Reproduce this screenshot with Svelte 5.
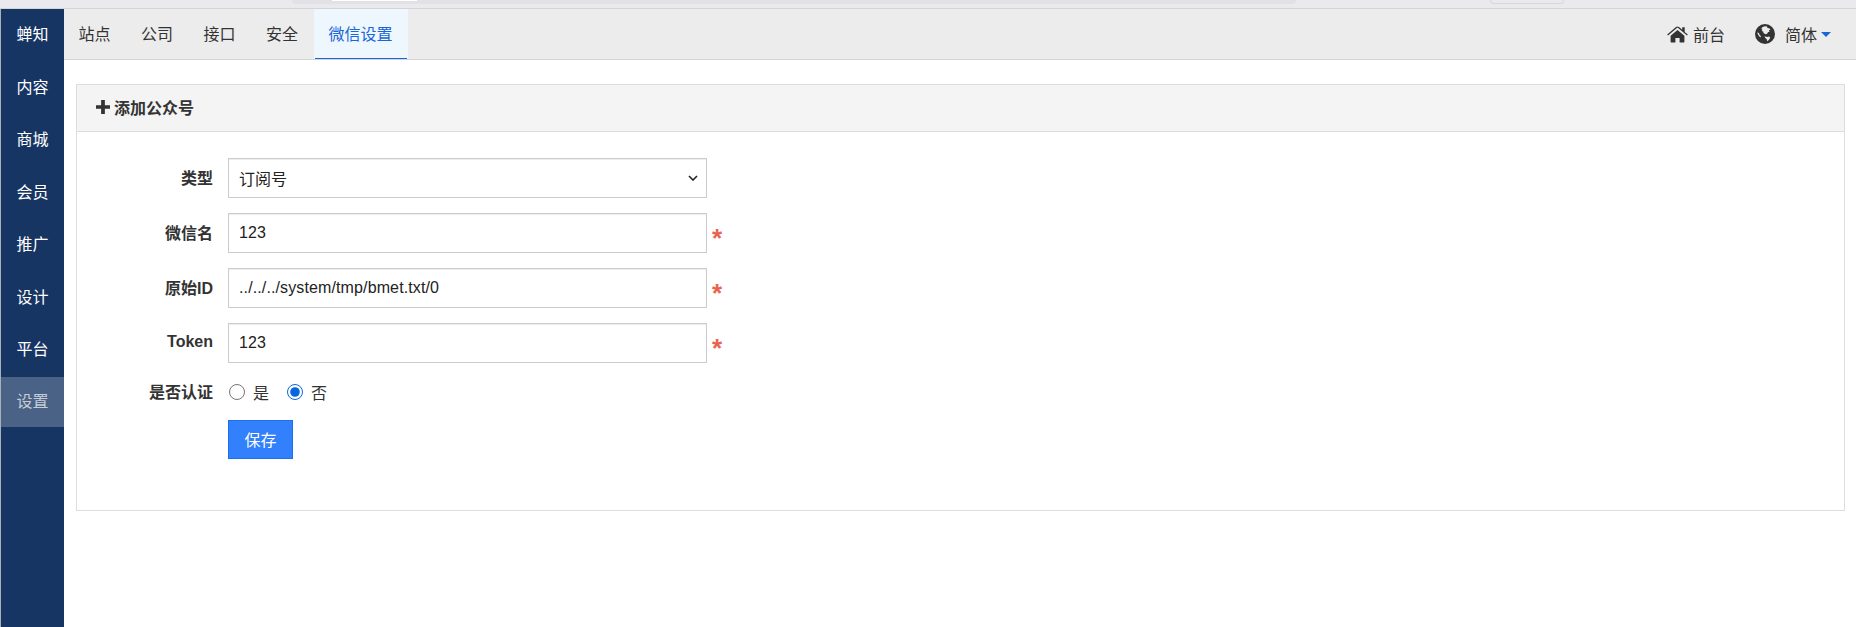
<script>
	const side = ['蝉知', '内容', '商城', '会员', '推广', '设计', '平台', '设置'];
	const tabs = ['站点', '公司', '接口', '安全', '微信设置'];
	const fields = [
		{ label: '微信名', value: '123' },
		{ label: '原始ID', value: '../../../system/tmp/bmet.txt/0' },
		{ label: 'Token', value: '123' }
	];
</script>

<div class="chrome">
	<div class="address"><span class="tabstub"></span></div>
	<div class="pill"></div>
</div>

<div class="page">
	<nav class="side">
		{#each side as item}
			<a class="side-item" class:current={item === '设置'} href="#top">{item}</a>
		{/each}
	</nav>

	<div class="main">
		<header class="topbar">
			<ul class="tabs">
				{#each tabs as tab}
					<li class:active={tab === '微信设置'}>{tab}</li>
				{/each}
			</ul>
			<div class="tools">
				<span class="tool">
					<svg width="21" height="17" viewBox="0 0 21 17" aria-hidden="true">
						<path fill="#333" d="M10.5 4 3.6 9.7V16c0 .3.2.5.5.5h4.300v-4.600h4.200v4.600h4.300c.3 0 .5-.2.5-.5V9.700z" />
						<path fill="#333" d="M20.800 8.500 17.700 5.900V1.200h-2.500v2.500L12 1.100a2.300 2.300 0 0 0-3 0L.2 8.500l.8 1 9.500-7.900 9.500 7.900z" />
					</svg>
					前台
				</span>
				<span class="tool lang">
					<svg class="globe" width="20" height="20" viewBox="0 0 20 20" aria-hidden="true">
						<circle cx="10" cy="10" r="10" fill="#333" />
						<path fill="#ececec" d="M10 2.200 7.600 3.100 6.300 4.800l1.100 1-.7 1.200 1.500.4.300 1.700 2 1.200 1.600-.5 1-1.700 1.400-.2-.6-1.600 1.600-.6-1.300-1.500-1.700-.3-.5-1.500zM9.600 12.300l2.500.6 2.200-.4.900 1.300-1.400 2.200-1.700 1.200-.3-1.900-1.500-1.200zM2.500 8.200l1.600 1.100.5 1.600 1.300 1-.4 1.500-1.600-1.300-1.300-2.400z" />
					</svg>
					<span>简体</span><i class="caret"></i>
				</span>
			</div>
		</header>

		<section class="panel">
			<div class="panel-head">
				<svg width="14" height="14" viewBox="0 0 12 12" aria-hidden="true">
					<path fill="#333" d="M4.400 0h3.200v4.400H12v3.200H7.600V12H4.400V7.600H0V4.400h4.400z" />
				</svg>
				<strong>添加公众号</strong>
			</div>
			<form class="panel-body">
				<div class="row">
					<span class="label">类型</span>
					<div class="control select">
						<span>订阅号</span>
						<svg width="10" height="6" viewBox="0 0 10 6" aria-hidden="true">
							<path fill="none" stroke="#222" stroke-width="1.600" d="M1 1l4 4 4-4" />
						</svg>
					</div>
				</div>
				{#each fields as field}
					<div class="row">
						<span class="label">{field.label}</span>
						<input class="control" value={field.value} />
						<span class="star">*</span>
					</div>
				{/each}
				<div class="row radios">
					<span class="label">是否认证</span>
					<label><input type="radio" name="certified" />是</label>
					<label><input type="radio" name="certified" checked />否</label>
				</div>
				<div class="row actions">
					<button type="button">保存</button>
				</div>
			</form>
		</section>
	</div>
</div>

<style>
	:global(body) {
		margin: 0;
		background: #fff;
		font-family: 'Liberation Sans', 'Noto Sans CJK SC', sans-serif;
		font-size: 16px;
		color: #333;
	}

	.chrome {
		height: 8px;
		background: #e9e9ee;
		border-bottom: 1px solid #d4d4d6;
		display: flex;
		overflow: hidden;
	}

	.address {
		width: 1004px;
		height: 4px;
		box-sizing: border-box;
		margin-left: 292px;
		background: #e1e1e6;
		border-radius: 0 0 6px 6px;
		padding-left: 40px;
	}

	.tabstub {
		display: block;
		width: 85px;
		height: 1px;
		background: #fff;
	}

	.pill {
		width: 74px;
		height: 4px;
		margin-left: 194px;
		border: 1px solid #d8d8dc;
		border-top: 0;
		border-radius: 0 0 6px 6px;
		box-sizing: border-box;
	}

	.page {
		display: flex;
		height: 618px;
	}

	.side {
		width: 64px;
		flex: none;
		background: #173563;
		display: flex;
		flex-direction: column;
		border-left: 1px solid #a8b0bc;
		box-sizing: border-box;
	}

	.side-item {
		height: 52.500px;
		line-height: 52px;
		text-align: center;
		color: #fff;
		text-decoration: none;
	}

	.side-item.current {
		height: 50px;
		line-height: 50px;
		background: #4a6285;
		color: #c5cdd8;
	}

	.main {
		flex: 1;
		min-width: 0;
	}

	.topbar {
		height: 50px;
		background: #ececec;
		border-bottom: 1px solid #d6d6d6;
		display: flex;
		justify-content: space-between;
	}

	.tabs {
		display: flex;
		list-style: none;
		margin: 0;
		padding: 0;
		gap: 0.5px;
	}

	.tabs li {
		padding: 0 15.500px 0 14.500px;
		line-height: 52px;
		color: #333;
	}

	.tabs li.active {
		position: relative;
		background: #eef6fe;
		color: #1a66d6;
	}

	.tabs li.active::after {
		content: '';
		position: absolute;
		left: 1px;
		right: 1px;
		bottom: 0;
		height: 1px;
		background: #1a66d6;
	}

	.tools {
		display: flex;
		align-items: center;
		padding-right: 25px;
		gap: 30px;
	}

	.tool {
		display: flex;
		align-items: center;
		gap: 5px;
	}

	.lang {
		gap: 0;
	}

	.globe {
		margin-right: 10px;
	}

	.caret {
		width: 0;
		height: 0;
		margin-left: 4px;
		border: 5px solid transparent;
		border-top-color: #1a66d6;
		border-bottom: 0;
	}

	.panel {
		margin: 24px 11px 0 12px;
		border: 1px solid #ddd;
	}

	.panel-head {
		height: 44px;
		padding: 0 19px 2px;
		background: #f4f4f4;
		border-bottom: 1px solid #ddd;
		display: flex;
		align-items: center;
		gap: 4px;
	}

	.panel-body {
		padding: 26px 0 0;
		height: 378px;
		box-sizing: border-box;
		margin: 0;
	}

	.row {
		display: flex;
		align-items: center;
		height: 40px;
		margin-bottom: 15px;
	}

	.label {
		width: 136px;
		margin-right: 15px;
		padding-bottom: 2px;
		text-align: right;
		font-weight: bold;
		color: #333;
	}

	.control {
		width: 479px;
		height: 40px;
		box-sizing: border-box;
		border: 1px solid #ccc;
		box-shadow: inset 0 1px 1px rgba(0, 0, 0, 0.075);
		padding: 0 10px;
		font: inherit;
		color: #222;
		background: #fff;
		margin: 0;
		outline: none;
	}

	input.control {
		letter-spacing: 0.12px;
	}

	.select {
		display: flex;
		align-items: center;
		justify-content: space-between;
		padding-right: 8px;
	}

	.star {
		font-size: 26px;
		font-weight: bold;
		line-height: 1;
		color: #e8644f;
		margin: 10px 0 0 5px;
	}

	.radios {
		height: 20px;
		margin-top: 19px;
		margin-bottom: 17px;
	}

	.radios label {
		display: flex;
		align-items: center;
		margin-right: 18px;
		color: #333;
	}

	.radios input {
		width: 16px;
		height: 16px;
		margin: 0 8px 0 1px;
		accent-color: #0a66dc;
	}

	.radios label + label input {
		margin-left: 0;
	}

	.actions {
		padding-left: 151px;
		margin: 0;
	}

	button {
		width: 65px;
		height: 39px;
		background: #3280fc;
		border: 1px solid #1d6ff0;
		color: #fff;
		font: inherit;
		padding: 0;
	}
</style>
